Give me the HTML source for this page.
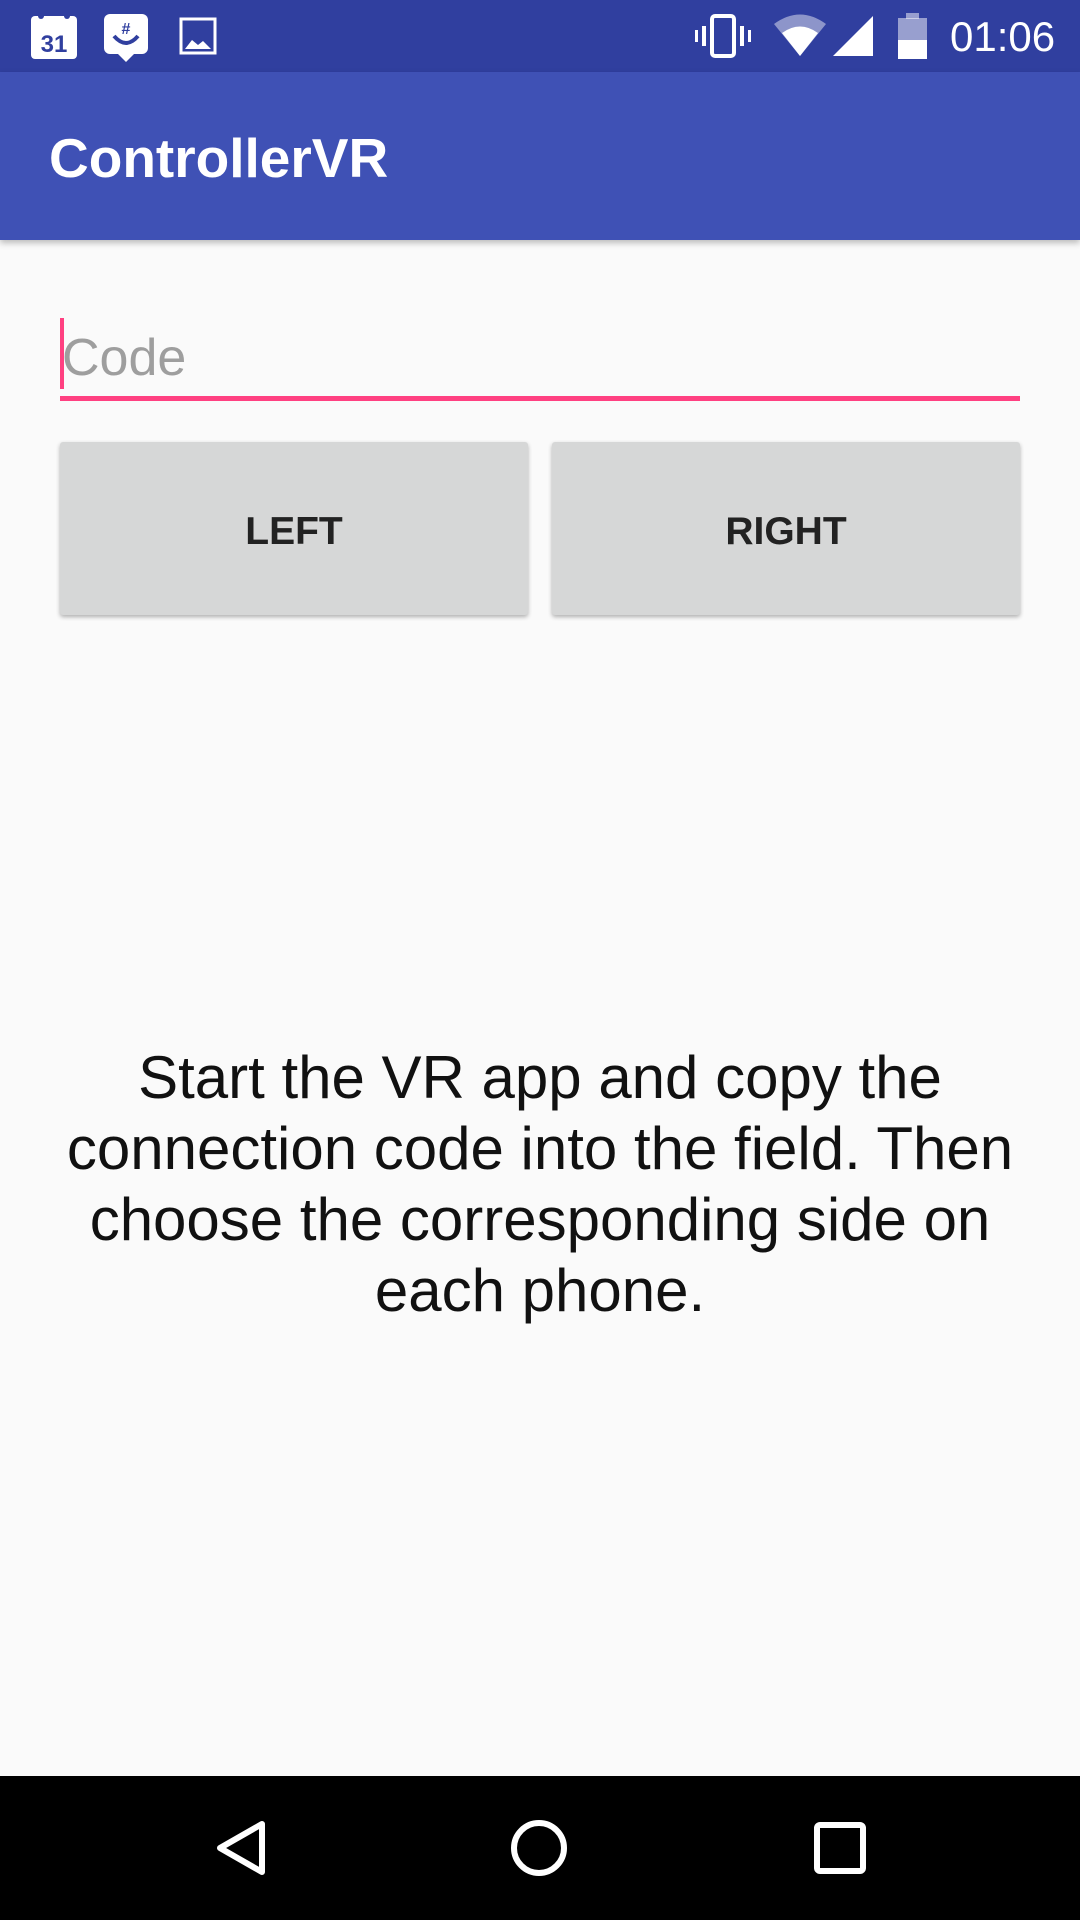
<!DOCTYPE html>
<html><head><meta charset="utf-8"><style>
*{margin:0;padding:0;box-sizing:border-box}
body{width:1080px;height:1920px;background:#FAFAFA;font-family:"Liberation Sans",sans-serif;position:relative;overflow:hidden}
.abs{position:absolute}
</style></head><body>
<div class="abs" style="left:0;top:0;width:1080px;height:72px;background:#303F9F"></div>
<svg class="abs" style="left:0;top:0" width="1080" height="72">
 <rect x="31" y="16" width="46" height="43" rx="4" fill="#fff"/>
 <circle cx="41" cy="16" r="3" fill="#303F9F"/><circle cx="67" cy="16" r="3" fill="#303F9F"/>
 <text x="54" y="52" font-size="24" font-weight="bold" text-anchor="middle" fill="#303F9F" font-family="Liberation Sans Narrow, Liberation Sans, sans-serif">31</text>
 <rect x="104" y="14" width="44" height="40" rx="6" fill="#fff"/><polygon points="118,54 134,54 126,62" fill="#fff"/>
 <text x="126" y="34" font-size="16" font-weight="bold" text-anchor="middle" fill="#303F9F">#</text>
 <path d="M114 36 Q126 50 138 36" stroke="#303F9F" stroke-width="4" fill="none"/>
 <rect x="181" y="19" width="34" height="34" fill="none" stroke="#fff" stroke-width="3"/>
 <path d="M185 49 L192 40 L198 45 L203 41 L211 49Z" fill="#fff"/>
 <rect x="712" y="16" width="22" height="40" rx="3" fill="none" stroke="#fff" stroke-width="4"/>
 <rect x="702" y="26" width="4" height="20" fill="#fff"/><rect x="740" y="26" width="4" height="20" fill="#fff"/>
 <rect x="748" y="30" width="3" height="12" fill="#fff"/><rect x="695" y="30" width="3" height="12" fill="#fff"/>
 <path d="M774 24 Q800 5 826 24 L800 56Z" fill="#fff" opacity="0.45"/>
 <path d="M782 33 Q800 20 818 33 L800 56Z" fill="#fff"/>
 <polygon points="873,16 873,56 833,56" fill="#fff"/>
 <rect x="898" y="18" width="29" height="41" fill="#fff" opacity="0.5"/><rect x="906" y="13" width="13" height="6" fill="#fff" opacity="0.5"/>
 <rect x="898" y="40" width="29" height="19" fill="#fff"/>
 <text x="950" y="51" font-size="42" fill="#fff">01:06</text>
</svg>
<div class="abs" style="left:0;top:72px;width:1080px;height:168px;background:#3F51B5;box-shadow:0 3px 6px rgba(0,0,0,.25)"></div>
<div class="abs" style="left:49px;top:126px;font-size:55px;color:#fff;font-weight:bold;line-height:64px">ControllerVR</div>
<div class="abs" style="left:60px;top:318px;width:4px;height:71px;background:#FF4081"></div>
<div class="abs" style="left:62px;top:328px;font-size:52px;color:#9e9e9e;line-height:60px">Code</div>
<div class="abs" style="left:60px;top:396px;width:960px;height:5px;background:#FF4081"></div>
<div class="abs" style="left:60px;top:442px;width:468px;height:173px;background:#D6D7D7;border-radius:3px;box-shadow:0 2px 4px rgba(0,0,0,.3);display:flex;align-items:center;justify-content:center;font-size:39px;font-weight:bold;color:#222;padding-top:6px">LEFT</div>
<div class="abs" style="left:552px;top:442px;width:468px;height:173px;background:#D6D7D7;border-radius:3px;box-shadow:0 2px 4px rgba(0,0,0,.3);display:flex;align-items:center;justify-content:center;font-size:39px;font-weight:bold;color:#222;padding-top:6px">RIGHT</div>
<div class="abs" style="left:40px;top:1042px;width:1000px;text-align:center;font-size:60px;line-height:71px;color:#111">Start the VR app and copy the connection code into the field. Then choose the corresponding side on each phone.</div>
<div class="abs" style="left:0;top:1776px;width:1080px;height:144px;background:#000"></div>
<svg class="abs" style="left:0;top:1776px" width="1080" height="144">
 <polygon points="262,48 262,96 220,72" fill="none" stroke="#fff" stroke-width="6" stroke-linejoin="round"/>
 <circle cx="539" cy="72" r="25" fill="none" stroke="#fff" stroke-width="6"/>
 <rect x="817" y="49" width="46" height="46" rx="3" fill="none" stroke="#fff" stroke-width="6"/>
</svg>
</body></html>
